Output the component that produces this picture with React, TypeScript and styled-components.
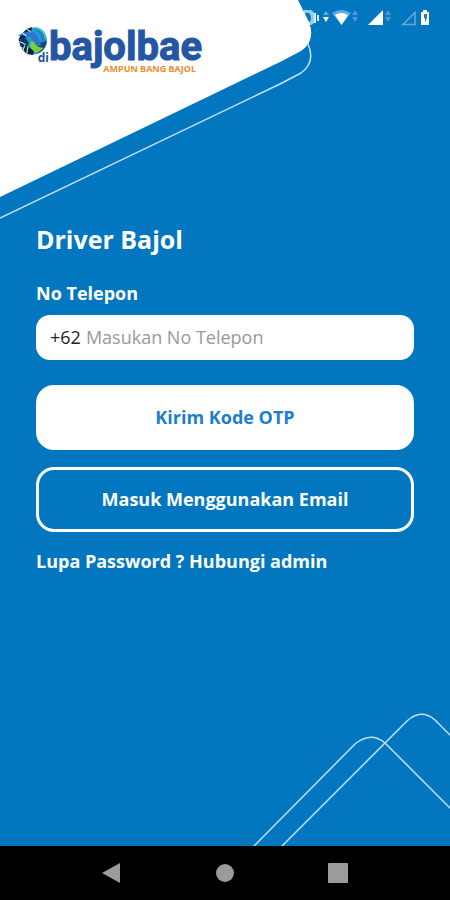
import React from "react";
import styled, { createGlobalStyle, css } from "styled-components";

const BLUE = "#0277bf";

const GlobalStyle = createGlobalStyle`
  *, *::before, *::after { box-sizing: border-box; }
  body { margin: 0; background: ${BLUE}; }
  body, button, input { font-family: "Open Sans", "Noto Sans", sans-serif; }
`;

const Screen = styled.div`
  display: flex;
  flex-direction: column;
  min-height: 100vh;
  background: ${BLUE};
  color: #fff;
`;

const Page = styled.main`
  position: relative;
  flex: 1;
  overflow: hidden;
`;

const TopShape = styled.svg`
  position: absolute;
  top: 0;
  left: 0;
`;

const BottomShape = styled.svg`
  position: absolute;
  right: 0;
  bottom: 0;
`;

const Header = styled.header`
  display: flex;
  justify-content: space-between;
  align-items: flex-start;
  height: 222px;
`;

const Brand = styled.div`
  position: relative;
  z-index: 1;
  display: flex;
  align-items: flex-start;
  padding: 24px 0 0 17px;
`;

const BrandMark = styled.div`
  display: flex;
  flex-direction: column;
  align-items: flex-start;
  width: 32px;
  padding-top: 2px;
`;

const BrandPrefix = styled.span`
  align-self: flex-end;
  margin-top: -4px;
  color: #24519f;
  font-size: 12px;
  font-weight: 700;
  line-height: 12px;
`;

const BrandWords = styled.div`
  display: flex;
  flex-direction: column;
  align-items: flex-end;
`;

const BrandName = styled.span`
  color: #2556a4;
  font-family: Roboto, sans-serif;
  font-size: 40px;
  font-weight: 700;
  line-height: 46px;
  -webkit-text-stroke: 1px #2556a4;
`;

const BrandTagline = styled.span`
  margin-top: -6px;
  padding-right: 6px;
  color: #f28a2e;
  font-size: 9px;
  font-weight: 700;
  line-height: 10px;
`;

const StatusBar = styled.div`
  padding: 8px 16px 0 0;
  line-height: 0;
`;

const Form = styled.form`
  position: relative;
  display: flex;
  flex-direction: column;
  padding: 0 36px;
`;

const Title = styled.h1`
  margin: 0 0 22px;
  font-size: 25px;
  font-weight: 700;
  line-height: 34px;
`;

const Label = styled.label`
  margin-bottom: 7px;
  font-size: 18px;
  font-weight: 700;
  line-height: 30px;
`;

const PhoneField = styled.div`
  display: flex;
  align-items: center;
  gap: 5px;
  height: 45px;
  margin-bottom: 25px;
  padding: 0 14px 2px;
  border-radius: 14px;
  background: #fff;
  color: #222;
  font-size: 18px;
`;

const PhoneInput = styled.input`
  flex: 1;
  min-width: 0;
  padding: 0;
  border: 0;
  outline: 0;
  background: transparent;
  color: #222;
  font-size: 18px;
  &::placeholder { color: #999; opacity: 1; }
`;

const Button = styled.button<{ $outline?: boolean }>`
  height: 65px;
  margin-bottom: 17px;
  padding: 0 6px 2px;
  border: 3px solid #fff;
  border-radius: 18px;
  font-size: 18px;
  font-weight: 700;
  cursor: pointer;
  ${({ $outline }) =>
    $outline
      ? css`background: transparent; color: #fff;`
      : css`background: #fff; color: #1b7fcb;`}
`;

const HelpLink = styled.a`
  align-self: flex-start;
  color: #fff;
  font-size: 18px;
  font-weight: 700;
  line-height: 24px;
  text-decoration: none;
`;

const NavBar = styled.nav`
  display: flex;
  justify-content: center;
  align-items: center;
  gap: 89px;
  height: 54px;
  background: #000;
`;

const NavButton = styled.button`
  width: 24px;
  height: 24px;
  padding: 0;
  border: 0;
  background: transparent;
  line-height: 0;
`;

const Globe = () => (
  <svg width="31" height="30" viewBox="0 0 29 29" aria-hidden="true">
    <circle cx="15.500" cy="14.500" r="13" fill="#1c9fd0" />
    <path d="M3 9 9 3l5-2-1 6-6 5-6 1z" fill="#0a2a4c" />
    <path d="M1 13l7-1 3 4-2 6-6-2z" fill="#0b3556" />
    <path d="M4 22l6-2 6 4-1 4-6-1z" fill="#0b2440" />
    <path d="M16 1c7 0 12 5 12 12l-4-2-3-7z" fill="#35c6c0" />
    <path d="M24 14l4 1c-1 5-3 9-8 11l-1-5z" fill="#123e6b" />
    <path d="M0 10C7 4 16 4 19 9c3 4 1 8 5 10-6 1-9-2-10-6C12 9 6 8 0 10z" fill="#2c76cf" />
    <path d="M18 3c7 2 10 8 7 15-2-3-1-6-3-9z" fill="#2879ce" />
    <path d="M13 15c-2 4 0 8 5 11 3-1 6-3 7-5-5 0-8-2-9-6z" fill="#82cb3f" />
    <path d="M5 7l4 3M2 15l6 3M7 19l-2 5M9 3l4 3M10 20l-1 7" stroke="#dff6fa" strokeWidth="1" fill="none" />
  </svg>
);

const StatusIcons = () => (
  <svg width="130" height="20" viewBox="304 8 130 20" role="img" aria-label="Wi-Fi, signal, battery">
    <path d="M304 10h7q4 2 4 8t-4 7h-7z" fill="#9dcbea" />
    <path d="M305 13h4q2 2 2 5t-2 4h-4z" fill={BLUE} />
    <path d="M315 13v10M318 15v6" stroke="#d9ecf8" strokeWidth="2" />
    <path d="M323 15l3-4 3 4z" fill="#64aad9" />
    <path d="M323 17h6l-3 5z" fill="#fff" />
    <path d="M332 13q9-6 19 0l-9.500 12z" fill="#62abd9" />
    <path d="M335 15q6-4 13 0l-6.500 10z" fill="#fff" />
    <path d="M352 15l3-5 3 5zM352 17h6l-3 5z" fill="#4b9bd2" />
    <path d="M368 25l15-15v15z" fill="#fff" />
    <path d="M385 15l3-5 3 5zM385 17h6l-3 5z" fill="#4b9bd2" />
    <path d="M403 24.500l12-12v12z" fill="none" stroke="#63aad9" strokeWidth="1.500" />
    <path d="M421 12h2v-2h4v2h2v13h-8z" fill="#fff" />
    <path d="M424 14h3v4l-2 4v-4h-1z" fill="#2d79ae" />
  </svg>
);

export default function App() {
  return (
    <>
      <GlobalStyle />
      <Screen>
        <Page>
          <BottomShape width="200" height="136" viewBox="250 710 200 136" aria-hidden="true">
            <g fill="none" stroke="#c3e0f4" strokeWidth="1.500">
              <path d="M253 847L355 744Q371 731 385 743L451 809" />
              <path d="M281 847L407 721Q421 708 435 720L451 736" />
            </g>
          </BottomShape>
          <Header>
            <Brand>
              <BrandMark>
                <Globe />
                <BrandPrefix>di</BrandPrefix>
              </BrandMark>
              <BrandWords>
                <BrandName>bajolbae</BrandName>
                <BrandTagline>AMPUN BANG BAJOL</BrandTagline>
              </BrandWords>
            </Brand>
            <StatusBar>
              <StatusIcons />
            </StatusBar>
            <TopShape width="320" height="222" viewBox="0 0 320 222" aria-hidden="true">
              <path d="M308 44Q316 62 301 73L280 84 0 218" fill="none" stroke="#c3e0f4" strokeWidth="1.500" />
              <path d="M0 0H298L309 22Q316 41 301 51L280 62 0 197z" fill="#fff" />
            </TopShape>
          </Header>
          <Form onSubmit={(e) => e.preventDefault()}>
            <Title>Driver Bajol</Title>
            <Label htmlFor="phone">No Telepon</Label>
            <PhoneField>
              <span>+62</span>
              <PhoneInput id="phone" type="tel" placeholder="Masukan No Telepon" />
            </PhoneField>
            <Button type="submit">Kirim Kode OTP</Button>
            <Button type="button" $outline>Masuk Menggunakan Email</Button>
            <HelpLink href="#admin">Lupa Password ? Hubungi admin</HelpLink>
          </Form>
        </Page>
        <NavBar aria-label="System">
          <NavButton aria-label="Back">
            <svg width="24" height="24" viewBox="0 0 24 24"><path d="M2 12L20 2v20z" fill="#9b9b9b" /></svg>
          </NavButton>
          <NavButton aria-label="Home">
            <svg width="24" height="24" viewBox="0 0 24 24"><circle cx="12" cy="12" r="9" fill="#9b9b9b" /></svg>
          </NavButton>
          <NavButton aria-label="Recents">
            <svg width="24" height="24" viewBox="0 0 24 24"><rect x="2" y="2" width="20" height="20" rx="1" fill="#9b9b9b" /></svg>
          </NavButton>
        </NavBar>
      </Screen>
    </>
  );
}
